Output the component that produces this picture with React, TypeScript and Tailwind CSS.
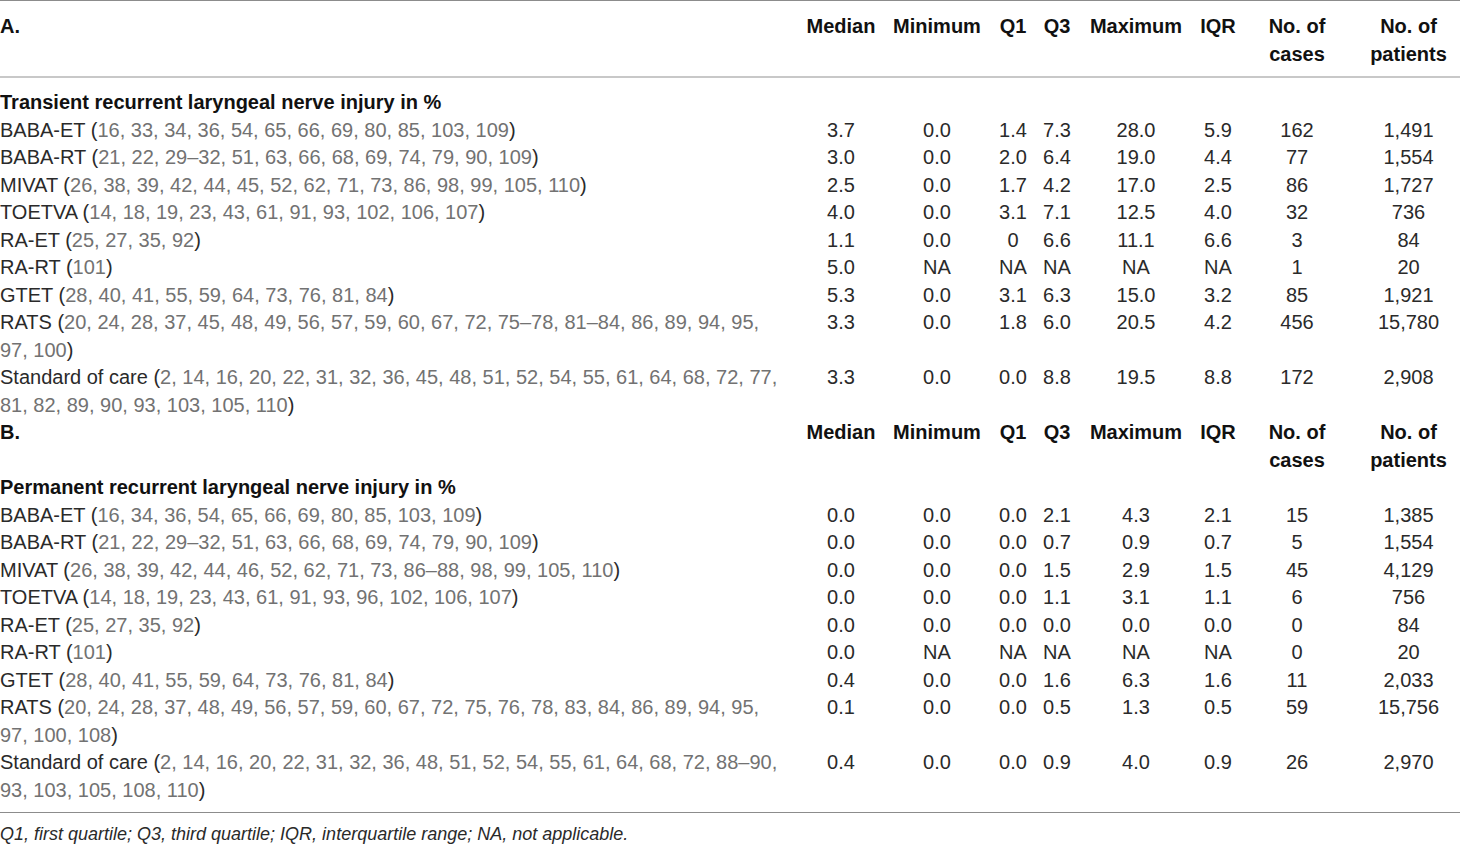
type Row = {
  name: string
  refs: string
  values: string[]
}

const transient: Row[] = [
  { name: 'BABA-ET', refs: '16, 33, 34, 36, 54, 65, 66, 69, 80, 85, 103, 109', values: ['3.7', '0.0', '1.4', '7.3', '28.0', '5.9', '162', '1,491'] },
  { name: 'BABA-RT', refs: '21, 22, 29–32, 51, 63, 66, 68, 69, 74, 79, 90, 109', values: ['3.0', '0.0', '2.0', '6.4', '19.0', '4.4', '77', '1,554'] },
  { name: 'MIVAT', refs: '26, 38, 39, 42, 44, 45, 52, 62, 71, 73, 86, 98, 99, 105, 110', values: ['2.5', '0.0', '1.7', '4.2', '17.0', '2.5', '86', '1,727'] },
  { name: 'TOETVA', refs: '14, 18, 19, 23, 43, 61, 91, 93, 102, 106, 107', values: ['4.0', '0.0', '3.1', '7.1', '12.5', '4.0', '32', '736'] },
  { name: 'RA-ET', refs: '25, 27, 35, 92', values: ['1.1', '0.0', '0', '6.6', '11.1', '6.6', '3', '84'] },
  { name: 'RA-RT', refs: '101', values: ['5.0', 'NA', 'NA', 'NA', 'NA', 'NA', '1', '20'] },
  { name: 'GTET', refs: '28, 40, 41, 55, 59, 64, 73, 76, 81, 84', values: ['5.3', '0.0', '3.1', '6.3', '15.0', '3.2', '85', '1,921'] },
  { name: 'RATS', refs: '20, 24, 28, 37, 45, 48, 49, 56, 57, 59, 60, 67, 72, 75–78, 81–84, 86, 89, 94, 95, 97, 100', values: ['3.3', '0.0', '1.8', '6.0', '20.5', '4.2', '456', '15,780'] },
  { name: 'Standard of care', refs: '2, 14, 16, 20, 22, 31, 32, 36, 45, 48, 51, 52, 54, 55, 61, 64, 68, 72, 77, 81, 82, 89, 90, 93, 103, 105, 110', values: ['3.3', '0.0', '0.0', '8.8', '19.5', '8.8', '172', '2,908'] },
]

const permanent: Row[] = [
  { name: 'BABA-ET', refs: '16, 34, 36, 54, 65, 66, 69, 80, 85, 103, 109', values: ['0.0', '0.0', '0.0', '2.1', '4.3', '2.1', '15', '1,385'] },
  { name: 'BABA-RT', refs: '21, 22, 29–32, 51, 63, 66, 68, 69, 74, 79, 90, 109', values: ['0.0', '0.0', '0.0', '0.7', '0.9', '0.7', '5', '1,554'] },
  { name: 'MIVAT', refs: '26, 38, 39, 42, 44, 46, 52, 62, 71, 73, 86–88, 98, 99, 105, 110', values: ['0.0', '0.0', '0.0', '1.5', '2.9', '1.5', '45', '4,129'] },
  { name: 'TOETVA', refs: '14, 18, 19, 23, 43, 61, 91, 93, 96, 102, 106, 107', values: ['0.0', '0.0', '0.0', '1.1', '3.1', '1.1', '6', '756'] },
  { name: 'RA-ET', refs: '25, 27, 35, 92', values: ['0.0', '0.0', '0.0', '0.0', '0.0', '0.0', '0', '84'] },
  { name: 'RA-RT', refs: '101', values: ['0.0', 'NA', 'NA', 'NA', 'NA', 'NA', '0', '20'] },
  { name: 'GTET', refs: '28, 40, 41, 55, 59, 64, 73, 76, 81, 84', values: ['0.4', '0.0', '0.0', '1.6', '6.3', '1.6', '11', '2,033'] },
  { name: 'RATS', refs: '20, 24, 28, 37, 48, 49, 56, 57, 59, 60, 67, 72, 75, 76, 78, 83, 84, 86, 89, 94, 95, 97, 100, 108', values: ['0.1', '0.0', '0.0', '0.5', '1.3', '0.5', '59', '15,756'] },
  { name: 'Standard of care', refs: '2, 14, 16, 20, 22, 31, 32, 36, 48, 51, 52, 54, 55, 61, 64, 68, 72, 88–90, 93, 103, 105, 108, 110', values: ['0.4', '0.0', '0.0', '0.9', '4.0', '0.9', '26', '2,970'] },
]

function HeaderRow({ label, first }: { label: string; first?: boolean }) {
  const pad = first ? 'pt-[12px] pb-[8px] border-b-2 border-[#c8c8c8]' : ''
  const cell = `font-bold align-top whitespace-nowrap text-[#111] ${pad}`
  return (
    <tr className={first ? 'border-t border-[#8c8c8c]' : ''}>
      <th className={`text-left ${cell}`}>{label}</th>
      <th className={cell}>Median</th>
      <th className={cell}>Minimum</th>
      <th className={cell}>Q1</th>
      <th className={cell}>Q3</th>
      <th className={cell}>Maximum</th>
      <th className={cell}>IQR</th>
      <th className={cell}>
        No. of
        <br />
        cases
      </th>
      <th className={cell}>
        No. of
        <br />
        patients
      </th>
    </tr>
  )
}

function DataRows({ rows, last }: { rows: Row[]; last?: boolean }) {
  return (
    <>
      {rows.map((row, i) => {
        const end = last && i === rows.length - 1
        return (
          <tr key={row.name} className={end ? 'border-b border-[#8c8c8c]' : ''}>
            <td className={`text-left align-top pr-[7px] ${end ? 'pb-[8px]' : ''}`}>
              {row.name} (<span className="text-[#727272]">{row.refs}</span>)
            </td>
            {row.values.map((v, j) => (
              <td key={j} className="text-center align-top whitespace-nowrap">
                {v}
              </td>
            ))}
          </tr>
        )
      })}
    </>
  )
}

export default function App() {
  return (
    <div className="w-[1460px] h-[845px] bg-white text-[#2a2a2a] font-['Liberation_Sans',Arial,sans-serif] overflow-hidden">
      <table className="w-[1460px] table-fixed border-collapse text-[20px] leading-[27.5px]">
        <colgroup>
          <col className="w-[793px]" />
          <col className="w-[96px]" />
          <col className="w-[96px]" />
          <col className="w-[56px]" />
          <col className="w-[32px]" />
          <col className="w-[126px]" />
          <col className="w-[38px]" />
          <col className="w-[120px]" />
          <col className="w-[103px]" />
        </colgroup>
        <tbody>
          <HeaderRow label="A." first />
          <tr>
            <td colSpan={9} className="pt-[11px] font-bold text-left text-[#111]">
              Transient recurrent laryngeal nerve injury in %
            </td>
          </tr>
          <DataRows rows={transient} />
          <HeaderRow label="B." />
          <tr>
            <td colSpan={9} className="font-bold text-left text-[#111]">
              Permanent recurrent laryngeal nerve injury in %
            </td>
          </tr>
          <DataRows rows={permanent} last />
        </tbody>
      </table>
      <p className="mt-[10px] italic text-[18px] leading-[22px] text-[#2a2a2a]">
        Q1, first quartile; Q3, third quartile; IQR, interquartile range; NA, not applicable.
      </p>
    </div>
  )
}
